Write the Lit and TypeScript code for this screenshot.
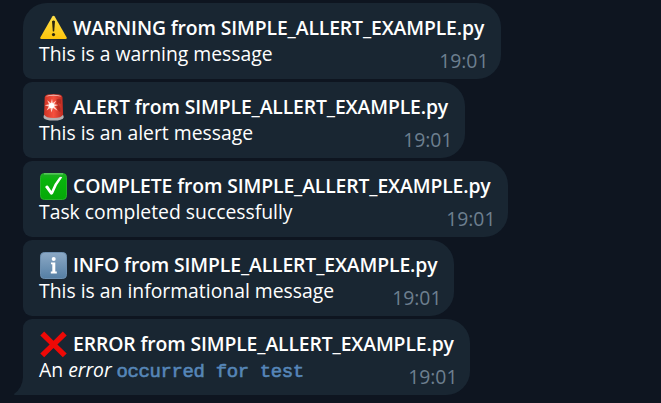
import { LitElement, html, svg, css } from "lit";
import { customElement, property } from "lit/decorators.js";
import { classMap } from "lit/directives/class-map.js";

type Kind = "warning" | "alert" | "complete" | "info" | "error";

const icons = {
  warning: svg`
    <defs><linearGradient id="w" x1="0" y1="0" x2="0" y2="1"><stop offset="0" stop-color="#ffe04a"/><stop offset="1" stop-color="#fdc40c"/></linearGradient></defs>
    <path d="M12.3 1.6Q13.5 -.1 14.7 1.6L26.7 22.4Q27.2 24 25.6 24H1.4Q-.2 24 .3 22.4Z" fill="url(#w)"/>
    <path d="M12 6.2Q13.5 4.8 15 6.2L14.2 16.2Q13.5 17 12.8 16.2Z" fill="#2b250f"/>
    <circle cx="13.5" cy="19.6" r="1.6" fill="#2b250f"/>`,
  alert: svg`
    <defs><linearGradient id="a" x1="0" y1="0" x2="1" y2="0"><stop offset="0" stop-color="#cf3325"/><stop offset=".5" stop-color="#f5503e"/><stop offset="1" stop-color="#bd2a20"/></linearGradient></defs>
    <path d="M3.6 22.3Q3.4 20.8 5 20.8H22Q23.6 20.8 23.6 22.3V23.8Q22.6 26.6 13.6 26.6T3.6 23.8Z" fill="#b4b0b2"/>
    <path d="M4.7 3.5Q5 1 8.5 .6Q13.5 .1 18.8 .6Q22.2 1 22.5 3.5L23.1 20.5Q21.5 24 13.6 24T4.1 20.5Z" fill="url(#a)"/>
    <path d="M5.4 2.4Q8 .8 13.5 .8T21.8 2.4Q18 1.7 13.5 1.7T5.4 2.4Z" fill="#efb9b0"/>
    <path d="M16.5 5.5Q20 4 21 6V10L18 9L20.5 14V18Q17 17 16.5 12Z" fill="#a9251d" opacity=".75"/>
    <path d="M12 4.7L12.8 9L16.3 6.4L14.2 10.3L18.6 11L14.4 12.3L17.6 16.8L13 14L11.4 18.5L10.4 14L6.6 16.5L8.7 12.6L4.8 11.3L9 10.2L7.2 6.3L10.8 9Z" fill="#ffd2c8"/>
    <circle cx="11.6" cy="11.5" r="2.6" fill="#fff"/>`,
  complete: svg`
    <defs><linearGradient id="c" x1="0" y1="0" x2="0" y2="1"><stop offset="0" stop-color="#1fad25"/><stop offset=".25" stop-color="#08b40c"/><stop offset="1" stop-color="#05a908"/></linearGradient></defs>
    <rect x=".5" y=".5" width="26" height="26" rx="3.8" fill="url(#c)" stroke="#28b02b" stroke-width="1"/>
    <path d="M4 .9H23" stroke="#76d278" stroke-width="1"/>
    <path d="M5.1 13.9Q7.3 11.3 8.5 13.5L11.4 17.9Q14.6 10 19.2 4.6Q20.6 3.3 22.2 4.3Q16.4 11.6 13 20.7Q11.2 22.7 10 20.7Z" fill="#fff"/>`,
  info: svg`
    <defs><linearGradient id="i" x1="0" y1="0" x2="0" y2="1"><stop offset="0" stop-color="#8ca9c5"/><stop offset="1" stop-color="#557fa5"/></linearGradient></defs>
    <rect x=".5" y=".5" width="26" height="26" rx="3.8" fill="url(#i)" stroke="#6d8fb0" stroke-width="1"/>
    <circle cx="13.7" cy="7" r="2" fill="#fff"/>
    <path d="M11 10.4H15.3V19.6H16.8V21.4H10.8V19.6H12.3V12.2H11Z" fill="#fff"/>`,
  error: svg`
    <path d="M4.2.6L13.5 9.8L22.8.6L26.7 4.4L17.4 13.4L26.7 22.4L22.8 26.2L13.5 17.1L4.2 26.2L.3 22.4L9.6 13.4L.3 4.4Z" fill="#ee0906"/>`,
};

@customElement("status-icon")
class StatusIcon extends LitElement {
  @property() kind: Kind = "info";
  static styles = css`
    :host { display: block; width: 27px; height: 27px; flex: none; }
    svg { display: block; width: 27px; height: 27px; }
  `;
  render() {
    return html`<svg viewBox="0 0 27 27">${icons[this.kind]}</svg>`;
  }
}

const messages = [
  { kind: "warning", label: "WARNING", width: 478, body: html`This is a warning message` },
  { kind: "alert", label: "ALERT", width: 442, body: html`This is an alert message` },
  { kind: "complete", label: "COMPLETE", width: 485, body: html`Task completed successfully` },
  { kind: "info", label: "INFO", width: 431, body: html`This is an informational message` },
  { kind: "error", label: "ERROR", width: 447, body: html`An <em>error</em> <code>occurred for test</code>` },
];

@customElement("app-root")
class AppRoot extends LitElement {
  static styles = css`
    :host {
      display: block; box-sizing: border-box; height: 403px; padding: 3px 0 0 23px;
      overflow: hidden; background: #0e1520; color: #fff;
      font: 19.35px/26px "Open Sans", "Noto Sans", sans-serif;
    }
    .list { display: flex; flex-direction: column; align-items: flex-start; gap: 3px; }
    .bubble {
      position: relative; box-sizing: border-box; height: 76px; padding: 12px 12.5px 0 16px;
      background: #192632; border-radius: 9px 24px 24px 9px; white-space: nowrap;
    }
    .first { border-top-left-radius: 24px; }
    .last { border-bottom-left-radius: 0; }
    .title { display: flex; align-items: center; gap: 6px; height: 26px; padding-left: 1px; font-weight: 600; letter-spacing: -0.12px; }
    .row { display: flex; justify-content: space-between; height: 26px; }
    .time { color: #6d7f8f; padding-top: 7px; }
    code {
      font: 400 19px/20px "Liberation Mono", monospace; letter-spacing: -0.4px;
      color: #5686b8; -webkit-text-stroke: 0.6px #5686b8;
    }
    .tail { position: absolute; left: -9px; bottom: 0; width: 9px; height: 18px; fill: #192632; }
  `;
  render() {
    return html`<div class="list">
      ${messages.map((m, i) => html`
        <div class=${classMap({ bubble: true, first: i === 0, last: i === 4 })} style="width:${m.width}px">
          <div class="title"><status-icon .kind=${m.kind as Kind}></status-icon><span>${m.label} from SIMPLE_ALLERT_EXAMPLE.py</span></div>
          <div class="row"><span>${m.body}</span><span class="time">19:01</span></div>
          ${i === 4 ? html`<svg class="tail" viewBox="0 0 9 18"><path d="M9 0Q8.5 11 0 17Q0 18 1 18H9Z"/></svg>` : ""}
        </div>`)}
    </div>`;
  }
}
